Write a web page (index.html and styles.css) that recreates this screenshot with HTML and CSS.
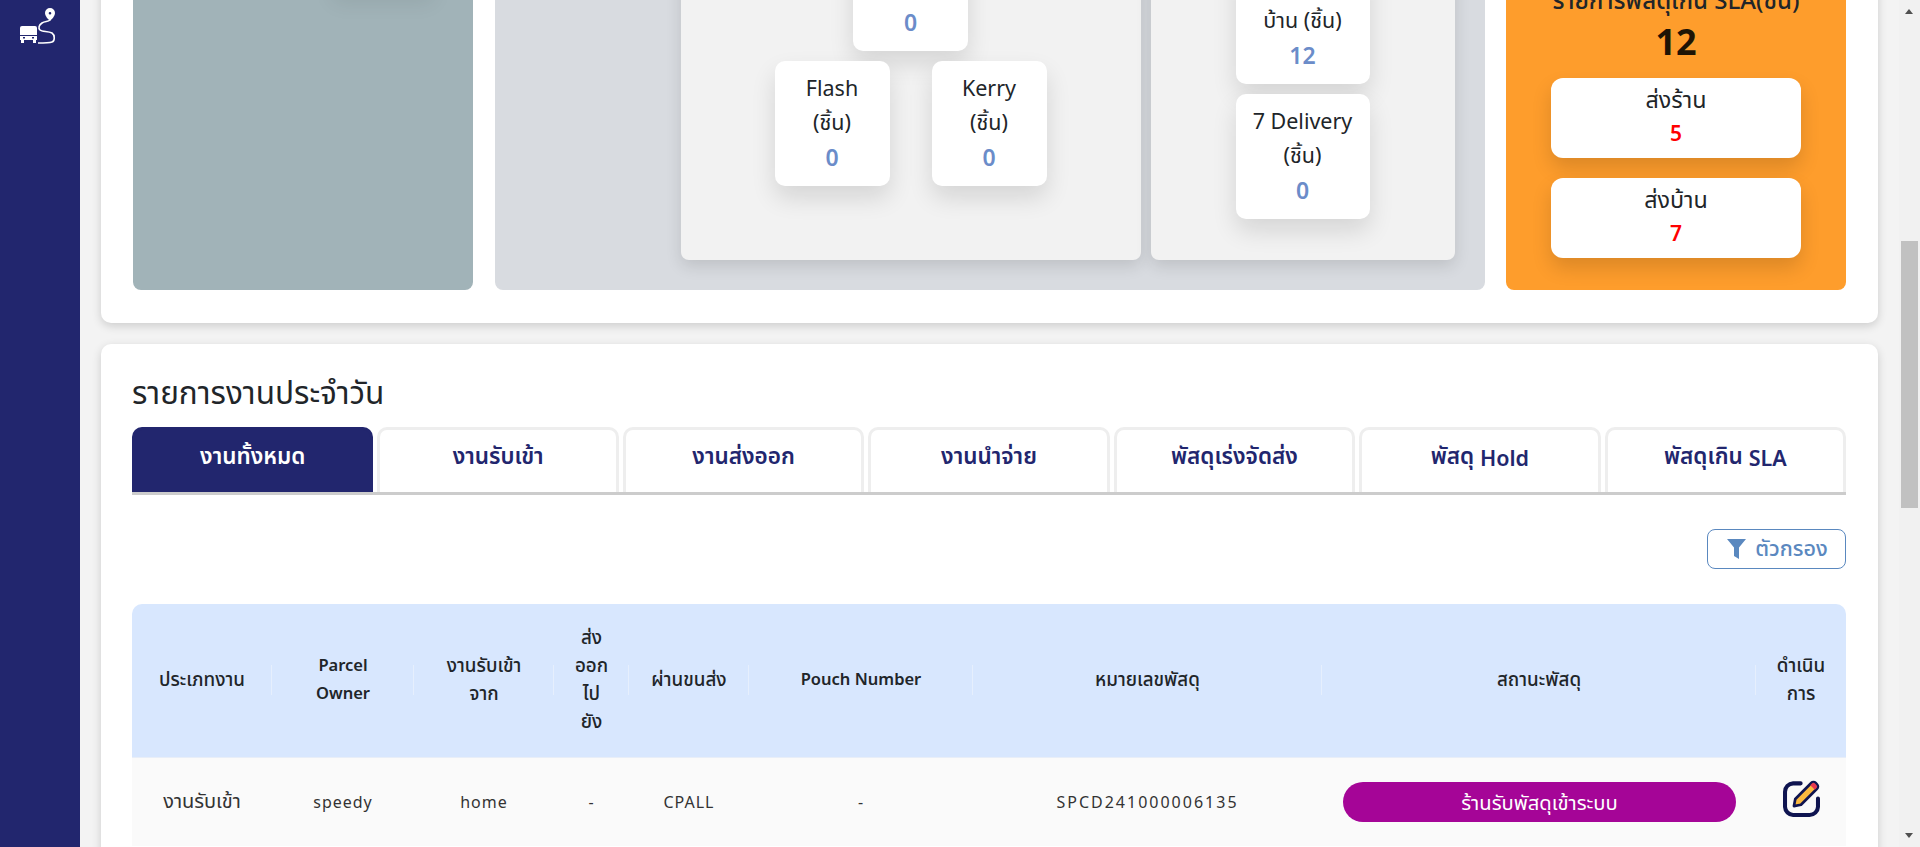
FILE: index.html
```html
<!DOCTYPE html>
<html lang="th">

<head>
    <meta charset="UTF-8">
    <meta name="viewport" content="width=device-width, initial-scale=1.0">
    <title>Dashboard</title>
    <link rel="stylesheet" href="styles.css">
</head>

<body>
    <div class="app">
        <aside class="sidebar">
            <svg class="logo" width="80" height="50" viewBox="0 0 80 50">
                <path fill="#fff" d="M22 26h13a2 2 0 0 1 2 2v7H20v-7a2 2 0 0 1 2-2z" />
                <path fill="#fff" fill-rule="evenodd" d="M20 36h17v4h-1v3h-3v-3h-9v3h-3v-3h-1zM23 37v1.500h2V37zM32 37v1.500h2V37z" />
                <path fill="none" stroke="#fff" stroke-width="1.600" d="M50 20c-2 2-5 1-8 3-3 2-4 5-2 7 2 2 8 1 12 3 3 2 3 8 0 9-3 1-9 1-14 1" />
                <path fill="#fff" fill-rule="evenodd" d="M50 8a5 5 0 0 1 5 5c0 3-3 6-5 8-2-2-5-5-5-8a5 5 0 0 1 5-5zM50 12a1.300 1.300 0 1 0 0 2.600 1.300 1.300 0 0 0 0-2.600z" />
            </svg>
        </aside>

        <main class="content">
            <section class="card card-summary">
                <div class="summary-grid">
                    <div class="panel panel-slate">
                        <div class="slate-card"></div>
                    </div>

                    <div class="panel panel-grey">
                        <div class="sub-panel sub-wide">
                            <div class="stat-card stat-top">
                                <div class="stat-label">(ชิ้น)</div>
                                <div class="stat-value">0</div>
                            </div>
                            <div class="stat-row">
                                <div class="stat-card">
                                    <div class="stat-label">Flash<br>(ชิ้น)</div>
                                    <div class="stat-value">0</div>
                                </div>
                                <div class="stat-card">
                                    <div class="stat-label">Kerry<br>(ชิ้น)</div>
                                    <div class="stat-value">0</div>
                                </div>
                            </div>
                        </div>
                        <div class="sub-panel sub-narrow">
                            <div class="stat-card stat-long">
                                <div class="stat-label">ส่ง<br>บ้าน (ชิ้น)</div>
                                <div class="stat-value">12</div>
                            </div>
                            <div class="stat-card stat-long">
                                <div class="stat-label">7 Delivery<br>(ชิ้น)</div>
                                <div class="stat-value">0</div>
                            </div>
                        </div>
                    </div>

                    <div class="panel panel-orange">
                        <div class="sla-title">รายการพัสดุเกิน SLA(ชิ้น)</div>
                        <div class="sla-total">12</div>
                        <div class="sla-card">
                            <div class="sla-label">ส่งร้าน</div>
                            <div class="sla-value">5</div>
                        </div>
                        <div class="sla-card">
                            <div class="sla-label">ส่งบ้าน</div>
                            <div class="sla-value">7</div>
                        </div>
                    </div>
                </div>
            </section>

            <section class="card card-jobs">
                <h2 class="jobs-title">รายการงานประจำวัน</h2>

                <div class="tabs">
                    <div class="tab active">งานทั้งหมด</div>
                    <div class="tab">งานรับเข้า</div>
                    <div class="tab">งานส่งออก</div>
                    <div class="tab">งานนำจ่าย</div>
                    <div class="tab">พัสดุเร่งจัดส่ง</div>
                    <div class="tab">พัสดุ&nbsp;<span class="latin">Hold</span></div>
                    <div class="tab">พัสดุเกิน&nbsp;<span class="latin">SLA</span></div>
                </div>

                <div class="toolbar">
                    <button class="filter-btn" type="button">
                        <svg class="filter-icon" width="19" height="20" viewBox="0 0 19 20">
                            <path fill="#5a88bf" d="M0 0h19l-7 8.500V20l-5-3V8.500z" />
                        </svg>
                        ตัวกรอง
                    </button>
                </div>

                <table class="jobs-table">
                    <thead>
                        <tr>
                            <th class="col-type">ประเภทงาน</th>
                            <th class="col-owner latin">Parcel<br>Owner</th>
                            <th class="col-from">งานรับเข้า<br>จาก</th>
                            <th class="col-to">ส่ง<br>ออก<br>ไป<br>ยัง</th>
                            <th class="col-via">ผ่านขนส่ง</th>
                            <th class="col-pouch latin">Pouch Number</th>
                            <th class="col-parcel">หมายเลขพัสดุ</th>
                            <th class="col-status">สถานะพัสดุ</th>
                            <th class="col-action">ดำเนิน<br>การ</th>
                        </tr>
                    </thead>
                    <tbody>
                        <tr>
                            <td class="thai-cell">งานรับเข้า</td>
                            <td>speedy</td>
                            <td>home</td>
                            <td>-</td>
                            <td>CPALL</td>
                            <td>-</td>
                            <td class="parcel-no">SPCD241000006135</td>
                            <td class="status-cell"><span class="status-pill">ร้านรับพัสดุเข้าระบบ</span></td>
                            <td>
                                <svg class="edit-icon" width="37" height="37" viewBox="1 1 22 22">
                                    <path fill="none" stroke="#0f1450" stroke-width="2.400" stroke-linecap="round" d="M11.500 3H7A5 5 0 0 0 2.200 8V17a5 5 0 0 0 4.800 4.800h9.800a5 5 0 0 0 5-4.800v-5" />
                                    <path fill="#fbb93f" stroke="#0f1450" stroke-width="1.600" stroke-linejoin="round" d="M7.500 16.500l.8-4.200L17.800 2.800a1.800 1.800 0 0 1 2.600 0l.8.8a1.800 1.800 0 0 1 0 2.600L11.700 15.700z" />
                                    <path fill="#e8374f" d="M17.200 4.100l.9-.9a1.400 1.400 0 0 1 2 0l.7.700a1.400 1.400 0 0 1 0 2l-.9.900z" />
                                </svg>
                            </td>
                        </tr>
                    </tbody>
                </table>
            </section>
        </main>

        <div class="scrollbar">
            <span class="arrow-up"></span>
            <div class="scroll-thumb"></div>
            <span class="arrow-down"></span>
        </div>
    </div>
</body>

</html>
```

FILE: styles.css
```css
* {
    box-sizing: border-box;
}

html,
body {
    margin: 0;
    height: 100%;
    overflow: hidden;
}

body {
    font-family: 'Noto Sans', 'Noto Sans Thai', sans-serif;
    color: #212529;
    background-color: #f3f3f3;
}

.app {
    display: flex;
    height: 847px;
    overflow: hidden;
}

/* Sidebar */
.sidebar {
    width: 80px;
    flex-shrink: 0;
    background-color: #22266e;
}

.logo {
    display: block;
}

/* Main column, the page is scrolled so the first card starts above the window */
.content {
    flex: 1;
    min-width: 0;
    padding: 0 21px 0 20.5px;
}

.card {
    background-color: #fff;
    border-radius: 10px;
    box-shadow: 0 3px 10px rgba(0, 0, 0, 0.16);
    padding: 0 32px;
}

.card-summary {
    margin-top: -100px;
    padding-bottom: 33px;
}

.summary-grid {
    display: grid;
    grid-template-columns: 340.5px 1fr 340px;
    gap: 21.5px;
    height: 390px;
}

.panel {
    border-radius: 8px;
}

.panel-slate {
    background-color: #a1b3b8;
    display: flex;
    justify-content: flex-end;
    padding-right: 40px;
}

.slate-card {
    width: 100px;
    height: 92px;
    box-shadow: 0 10px 20px rgba(0, 0, 0, 0.08);
}

.panel-grey {
    background-color: #d8dbe0;
    display: flex;
    justify-content: flex-end;
    gap: 10px;
    padding: 0 30px 30px 0;
}

.sub-panel {
    background-color: #f2f2f2;
    border-radius: 8px;
    box-shadow: 0 6px 16px rgba(0, 0, 0, 0.12);
    display: flex;
    flex-direction: column;
    justify-content: flex-end;
    align-items: center;
    gap: 10px;
}

.sub-wide {
    width: 460px;
    padding-bottom: 74px;
}

.sub-narrow {
    width: 304px;
    padding-bottom: 41px;
}

.stat-row {
    display: flex;
    gap: 42px;
}

.stat-card {
    width: 115px;
    height: 125px;
    background-color: #fff;
    border-radius: 10px;
    box-shadow: 0 12px 24px rgba(0, 0, 0, 0.12);
    padding-top: 10px;
    text-align: center;
}

.stat-long {
    width: 134px;
}

.stat-top {
    padding-top: 44px;
}

.stat-label {
    font-size: 21.500px;
    line-height: 34px;
}

.stat-value {
    margin-top: 1px;
    font-size: 23px;
    line-height: 35px;
    font-weight: 600;
    color: #6b8cc9;
}

.panel-orange {
    background-color: #fe9d2c;
    display: flex;
    flex-direction: column;
    justify-content: flex-end;
    align-items: center;
    padding-bottom: 32px;
}

.sla-title {
    font-size: 24px;
    line-height: 34px;
    font-weight: 500;
    white-space: nowrap;
}

.sla-total {
    font-size: 36px;
    line-height: 50px;
    font-weight: 700;
    color: #1e1405;
    margin-bottom: 11px;
}

.sla-card {
    width: 250px;
    height: 80px;
    background-color: #fff;
    border-radius: 12px;
    box-shadow: 0 10px 20px rgba(0, 0, 0, 0.14);
    padding-top: 6px;
    text-align: center;
}

.sla-card+.sla-card {
    margin-top: 20px;
}

.sla-label {
    font-size: 23.300px;
    line-height: 30px;
}

.sla-value {
    font-size: 21px;
    line-height: 38px;
    font-weight: 600;
    color: #f00;
}

/* Daily jobs */
.card-jobs {
    margin-top: 21px;
    padding-top: 28px;
    padding-bottom: 40px;
    padding-left: 31.5px;
}

.jobs-title {
    margin: 0 0 16px;
    font-size: 31.500px;
    line-height: 39px;
    font-weight: 400;
}

.tabs {
    display: grid;
    grid-template-columns: repeat(7, 1fr);
    gap: 4px;
    border-bottom: 3px solid #ccc;
}

.tab {
    height: 65px;
    padding-bottom: 8px;
    display: flex;
    align-items: center;
    justify-content: center;
    border: 3px solid #eee;
    border-bottom: none;
    border-radius: 10px 10px 0 0;
    font-size: 22.500px;
    font-weight: 600;
    color: #22266e;
}

.tab .latin {
    font-size: 21.500px;
}

.tab.active {
    background-color: #22266e;
    border-color: #22266e;
    color: #fff;
}

.toolbar {
    display: flex;
    justify-content: flex-end;
    padding: 34px 0 35px;
}

.filter-btn {
    width: 139px;
    height: 40px;
    padding: 0 0 0 2px;
    display: flex;
    align-items: center;
    justify-content: center;
    gap: 9px;
    background-color: #fff;
    border: 1px solid #5a88bf;
    border-radius: 8px;
    font-family: inherit;
    font-size: 21.500px;
    font-weight: 500;
    color: #5a88bf;
}

.filter-icon {
    flex-shrink: 0;
}

.jobs-table {
    width: 100%;
    table-layout: fixed;
    border-collapse: separate;
    border-spacing: 0;
}

.jobs-table th {
    position: relative;
    height: 154px;
    padding: 0 4px 3px;
    background-color: #d8e7fe;
    border-bottom: 1px solid #e8eef8;
    font-size: 18.800px;
    line-height: 28px;
    font-weight: 500;
    text-align: center;
}

.jobs-table th.latin {
    font-size: 16.500px;
    font-weight: 600;
}

.jobs-table th:first-child {
    border-top-left-radius: 10px;
}

.jobs-table th:last-child {
    border-top-right-radius: 10px;
}

.jobs-table th:not(:last-child)::after {
    content: "";
    position: absolute;
    top: 61px;
    right: 0;
    width: 1px;
    height: 30px;
    background-color: #e6effd;
}

.jobs-table td {
    height: 88px;
    padding: 0 16px;
    background-color: #fafafa;
    font-size: 16px;
    text-align: center;
    letter-spacing: 1px;
    color: #333;
}

.jobs-table .thai-cell {
    padding: 0;
    font-size: 20px;
    letter-spacing: 0;
}

.jobs-table .parcel-no {
    padding: 0;
    letter-spacing: 2px;
}

.jobs-table .status-cell {
    padding: 0 20px 0 21px;
}

.col-type {
    width: 140px;
}

.col-owner {
    width: 142px;
}

.col-from {
    width: 140px;
}

.col-to {
    width: 75px;
}

.col-via {
    width: 120px;
}

.col-pouch {
    width: 224px;
}

.col-parcel {
    width: 349px;
}

.col-status {
    width: 434px;
}

.status-pill {
    display: block;
    height: 40px;
    line-height: 40px;
    border-radius: 20px;
    background-color: #a50597;
    color: #fff;
    font-size: 20.200px;
    letter-spacing: 0;
}

.edit-icon {
    display: block;
    margin: -7px auto 0;
}

/* Window scrollbar */
.scrollbar {
    position: relative;
    width: 21px;
    flex-shrink: 0;
    background-color: #f1f1f1;
}

.scroll-thumb {
    position: absolute;
    top: 241px;
    left: 2px;
    width: 17px;
    height: 267px;
    background-color: #c1c1c1;
}

.arrow-up,
.arrow-down {
    position: absolute;
    left: 6px;
    width: 0;
    height: 0;
    border-left: 4px solid transparent;
    border-right: 4px solid transparent;
}

.arrow-up {
    top: 9px;
    border-bottom: 5px solid #505050;
}

.arrow-down {
    bottom: 9px;
    border-top: 5px solid #505050;
}
```
